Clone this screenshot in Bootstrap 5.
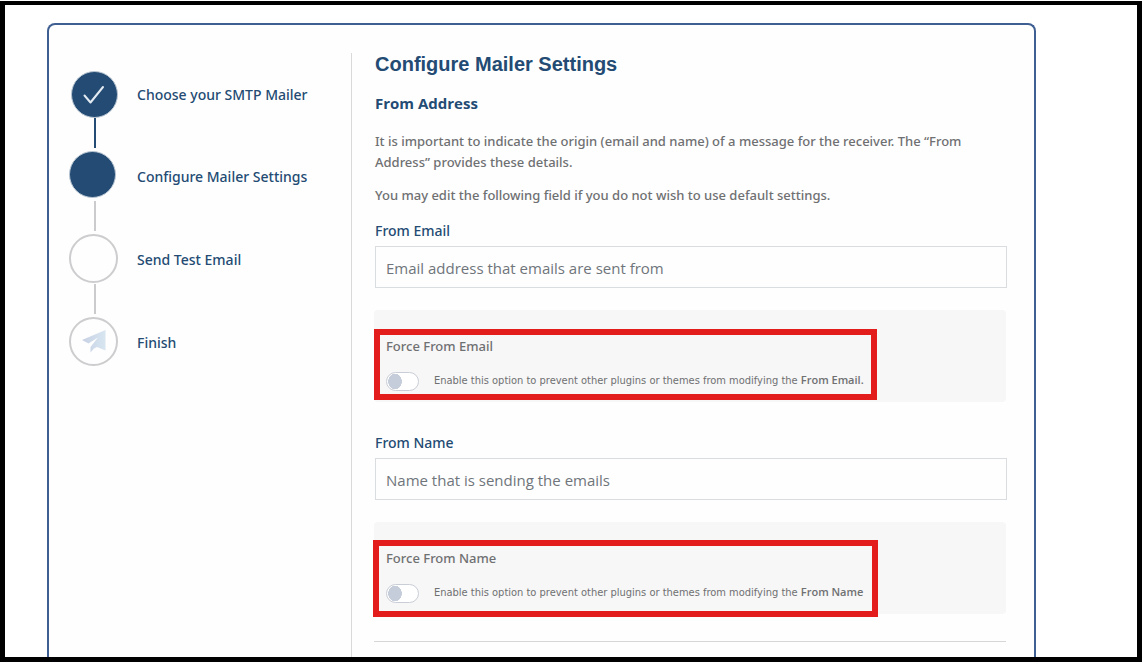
<!DOCTYPE html>
<html lang="en">
<head>
<meta charset="utf-8">
<meta name="viewport" content="width=device-width, initial-scale=1">
<title>Configure Mailer Settings</title>
<link href="https://cdn.jsdelivr.net/npm/bootstrap@5.3.0/dist/css/bootstrap.min.css" rel="stylesheet">
<style>
body{font-family:"Noto Sans","Open Sans",sans-serif;color:#6f7072;background:#fff;padding-top:1px}
.frame{border:5px solid #000;border-top-width:4px;min-height:calc(100vh - 1px);padding:18px 101px 0 42px}
.panel{border:2px solid #3f5f93;border-bottom:0;border-radius:8px 8px 0 0;padding:28px 27px 0 20px;background:#fefefe}
.steps{width:283px;padding-top:16px;border-right:1px solid #d9d9d9}
.step{gap:19px;color:#234b73;font-size:14px;font-weight:500;line-height:20px}
.step-name{padding-top:2px}
.slot{width:49px;height:49px}
.dot{border-radius:50%;width:49px;height:49px;border:2px solid #cdcdcf}
.dot.filled{width:47px;height:47px;border:1px solid #b9c6d3;background:#234b73}
.link{width:2px;height:30px;margin:1px 0 3px 25px;background:#cbcbcd}
.link.done{margin-top:0;background:#234b73}
h1{font:bold 20px/28px "Liberation Sans",Arial,sans-serif;color:#234b73;margin:-3px 0 15px}
h2{font-family:"Open Sans",sans-serif;font-size:15px;font-weight:700;line-height:20px;color:#234b73;margin:0 0 18px}
.settings{padding-left:23px}
.settings p{font-size:13px;font-weight:500;line-height:21px;margin-bottom:12px}
.settings p+p{margin-bottom:15px}
.form-label{font-size:14px;font-weight:500;line-height:20px;color:#234b73;margin-bottom:5px;display:block}
.settings .form-control{height:42px;border:1px solid #dadde0;border-radius:0;padding:2px 10px 0;font-family:"Open Sans",sans-serif;font-size:15px;background:#fefefe;margin-bottom:22px}
.form-control::placeholder{color:#6f757b}
.force{background:#f7f7f7;border-radius:4px;padding:26px 12px 11px;margin:0 1px 31px -1px}
.force.last{margin-bottom:27px}
.force-title{font-size:13px;font-weight:500;line-height:20px;margin-bottom:15px}
.force .form-check{min-height:20px;padding:0;margin:0;gap:15px}
.force .form-check-input{width:33px;height:19px;margin:0;float:none;border:1px solid #c9cdd6;background:#fff radial-gradient(ellipse 7px 8px at 8px 50%,#c5ccda 94%,transparent)}
.form-check-label{font-family:"DejaVu Sans Condensed","Open Sans",sans-serif;font-size:11px;line-height:20px}
.form-check-label strong{font-family:"Open Sans",sans-serif;font-weight:600;line-height:1}
.mark-box{position:absolute;border:6px solid #e31c1c;pointer-events:none;left:0;top:19px;bottom:2px;width:503px}
.mark-box.wide{left:-1px;top:18px;bottom:-3px;width:505px}
hr{margin:0 1px 12px -1px;border-color:#d5d6d8;opacity:1}
</style>
</head>
<body>
<div class="frame d-flex flex-column">
<main class="panel d-flex flex-grow-1">
<ol class="steps list-unstyled mb-0 flex-shrink-0">
<li><div class="step d-flex align-items-center"><div class="slot d-flex align-items-end justify-content-end"><span class="dot filled d-flex align-items-center justify-content-center"><svg width="24" height="24" viewBox="0 0 24 24" fill="none" stroke="#e3eaf2" stroke-width="2" stroke-linecap="round" stroke-linejoin="round" aria-hidden="true"><path d="M1.500 12.500L7.500 19.500L20 4"/></svg></span></div><span class="step-name">Choose your SMTP Mailer</span></div><div class="link done"></div></li>
<li><div class="step d-flex align-items-center"><div class="slot"><span class="dot filled d-block"></span></div><span class="step-name">Configure Mailer Settings</span></div><div class="link"></div></li>
<li><div class="step d-flex align-items-center"><div class="slot"><span class="dot d-block"></span></div><span class="step-name">Send Test Email</span></div><div class="link"></div></li>
<li><div class="step d-flex align-items-center"><div class="slot"><span class="dot d-flex align-items-center justify-content-center"><svg width="24" height="24" viewBox="0 0 24 24" aria-hidden="true"><defs><linearGradient id="plane"><stop offset="0" stop-color="#c6d0e3"/><stop offset="1" stop-color="#d8e6f1"/></linearGradient></defs><path fill="url(#plane)" d="M0 10L23.500 0V20.500L15 17L12 18.500L8.500 22.500L8.500 17L16 7.500L6.500 13.500Z"/></svg></span></div><span class="step-name">Finish</span></div></li>
</ol>
<section class="settings flex-grow-1">
<h1>Configure Mailer Settings</h1>
<h2>From Address</h2>
<p>It is important to indicate the origin (email and name) of a message for the receiver. The “From Address” provides these details.</p>
<p>You may edit the following field if you do not wish to use default settings.</p>
<form>
<label class="form-label" for="from-email">From Email</label>
<input class="form-control" type="email" id="from-email" placeholder="Email address that emails are sent from">
<div class="force position-relative">
<div class="force-title">Force From Email</div>
<div class="form-check form-switch d-flex align-items-center"><input class="form-check-input" type="checkbox" role="switch" id="force-email"><label class="form-check-label" for="force-email">Enable this option to prevent other plugins or themes from modifying the <strong>From Email.</strong></label></div>
<div class="mark-box"></div>
</div>
<label class="form-label" for="from-name">From Name</label>
<input class="form-control" type="text" id="from-name" placeholder="Name that is sending the emails">
<div class="force last position-relative">
<div class="force-title">Force From Name</div>
<div class="form-check form-switch d-flex align-items-center"><input class="form-check-input" type="checkbox" role="switch" id="force-name"><label class="form-check-label" for="force-name">Enable this option to prevent other plugins or themes from modifying the <strong>From Name</strong></label></div>
<div class="mark-box wide"></div>
</div>
<hr>
</form>
</section>
</main>
</div>
<script src="https://cdn.jsdelivr.net/npm/bootstrap@5.3.0/dist/js/bootstrap.bundle.min.js"></script>
</body>
</html>
